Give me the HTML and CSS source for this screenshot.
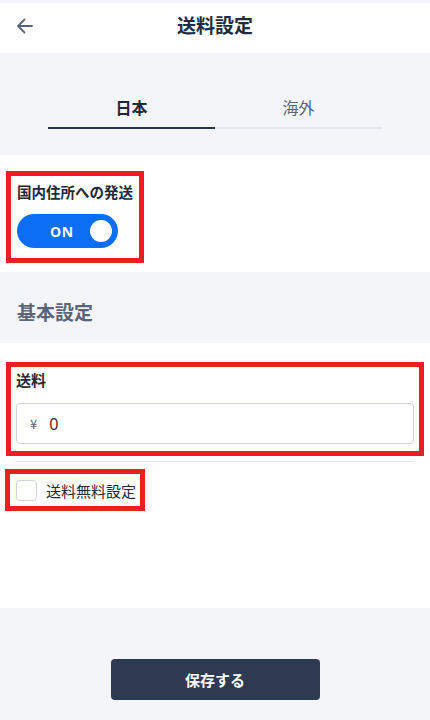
FILE: index.html
```html
<!DOCTYPE html>
<html lang="ja">
<head>
<meta charset="utf-8">
<link rel="stylesheet" href="styles.css">
</head>
<body>
<div class="strip"></div>
<header class="header">
  <svg class="back" width="20" height="20" viewBox="0 0 20 20"><path d="M17 10H3M9.5 3.5L3 10l6.5 6.5" fill="none" stroke="#5b6478" stroke-width="1.8" stroke-linecap="round" stroke-linejoin="round"/></svg>
  <h1 class="title">送料設定</h1>
</header>
<section class="tabs-sec">
  <div class="tabs">
    <div class="tab active">日本</div>
    <div class="tab">海外</div>
  </div>
</section>
<section class="white-sec domestic">
  <div class="mark mark-dom">
    <div class="label">国内住所への発送</div>
    <div class="toggle"><span class="on">ON</span><span class="knob"></span></div>
  </div>
</section>
<section class="grey-sec basic">
  <h2 class="sec-title">基本設定</h2>
</section>
<section class="white-sec fee">
  <div class="mark mark-fee">
    <div class="label">送料</div>
    <div class="input"><span class="yen">¥</span><span class="val">0</span></div>
  </div>
  <div class="divider"></div>
  <div class="mark mark-free">
    <span class="check"></span><span class="check-label">送料無料設定</span>
  </div>
</section>
<footer class="footer">
  <button class="save">保存する</button>
</footer>
</body>
</html>
```
FILE: styles.css
```css
* { box-sizing: border-box; }
html, body { margin: 0; padding: 0; }
body {
  width: 430px;
  background: #fff;
  font-family: "Noto Sans CJK JP", "Noto Sans", sans-serif;
  color: #1e293b;
}
.strip { height: 3px; background: #f4f5f8; }
.header {
  height: 50px;
  position: relative;
  display: flex;
  align-items: center;
  justify-content: center;
}
.back { position: absolute; left: 15px; top: 13px; }
.title {
  margin: 0;
  font-size: 19px;
  font-weight: 700;
  color: #222b3b;
  line-height: 1;
  transform: translateY(-4px);
}
.tabs-sec {
  background: #f4f5f9;
  height: 102px;
  padding: 43px 48px 0;
}
.tabs { display: flex; }
.tab {
  flex: 1;
  text-align: center;
  font-size: 16px;
  line-height: 22px;
  padding-bottom: 9px;
  color: #5b6478;
  border-bottom: 2px solid #e4e6ee;
}
.tab.active {
  font-weight: 700;
  color: #1e293b;
  border-bottom-color: #283447;
}
.white-sec { background: #fff; }
.domestic { height: 117px; padding: 16px 0 0 6px; }
.mark { border: 5px solid #ee1c25; }
.mark-dom {
  width: 138px;
  height: 92px;
  padding: 6px 0 0 6px;
}
.label {
  font-size: 14.5px;
  font-weight: 700;
  line-height: 20px;
  color: #1e293b;
  white-space: nowrap;
}
.toggle {
  margin-top: 12px;
  width: 101px;
  height: 34px;
  border-radius: 17px;
  background: #0b6ef5;
  display: flex;
  align-items: center;
  padding: 0 6px 0 33px;
  justify-content: space-between;
}
.on {
  color: #fff;
  font-family: "Open Sans", sans-serif;
  font-weight: 700;
  font-size: 14px;
  letter-spacing: 0.5px;
}
.knob {
  width: 22px;
  height: 22px;
  border-radius: 50%;
  background: #fff;
}
.grey-sec { background: #f4f5f9; }
.basic { height: 71px; padding: 28px 0 0 17px; }
.sec-title {
  margin: 0;
  font-size: 19px;
  font-weight: 700;
  line-height: 24px;
  color: #5b6478;
}
.fee { height: 265px; padding: 19px 0 0 0; }
.mark-fee {
  margin-left: 6px;
  width: 418px;
  height: 94px;
  padding: 2px 5px 0 5px;
}
.mark-fee .label { line-height: 22px; font-size: 15px; }
.input {
  margin-top: 12px;
  height: 41px;
  border: 1px solid #cfd4dd;
  border-radius: 4px;
  display: flex;
  align-items: center;
  padding-left: 13px;
  font-size: 16px;
}
.yen { color: #5b6478; font-size: 13px; margin-right: 12px; }
.val { color: #1e293b; font-family: "Open Sans", sans-serif; }
.divider {
  margin: 5px 16px 0;
  height: 1px;
  background: #e5e7ee;
}
.mark-free {
  margin: 7px 0 0 5px;
  width: 140px;
  height: 42px;
  display: flex;
  align-items: center;
  padding-left: 6px;
}
.check {
  width: 21px;
  height: 21px;
  border: 1px solid #cfd4dd;
  border-radius: 4px;
  background: #fff;
}
.check-label {
  margin-left: 9px;
  font-size: 15px;
  color: #1e293b;
}
.footer {
  height: 112px;
  background: #f4f5f9;
  padding-top: 51px;
  display: flex;
  justify-content: center;
  align-items: flex-start;
}
.save {
  width: 209px;
  height: 41px;
  border: none;
  border-radius: 4px;
  background: #2d3a4f;
  color: #fff;
  font-family: "Noto Sans CJK JP", sans-serif;
  font-size: 15px;
  font-weight: 700;
}
```
